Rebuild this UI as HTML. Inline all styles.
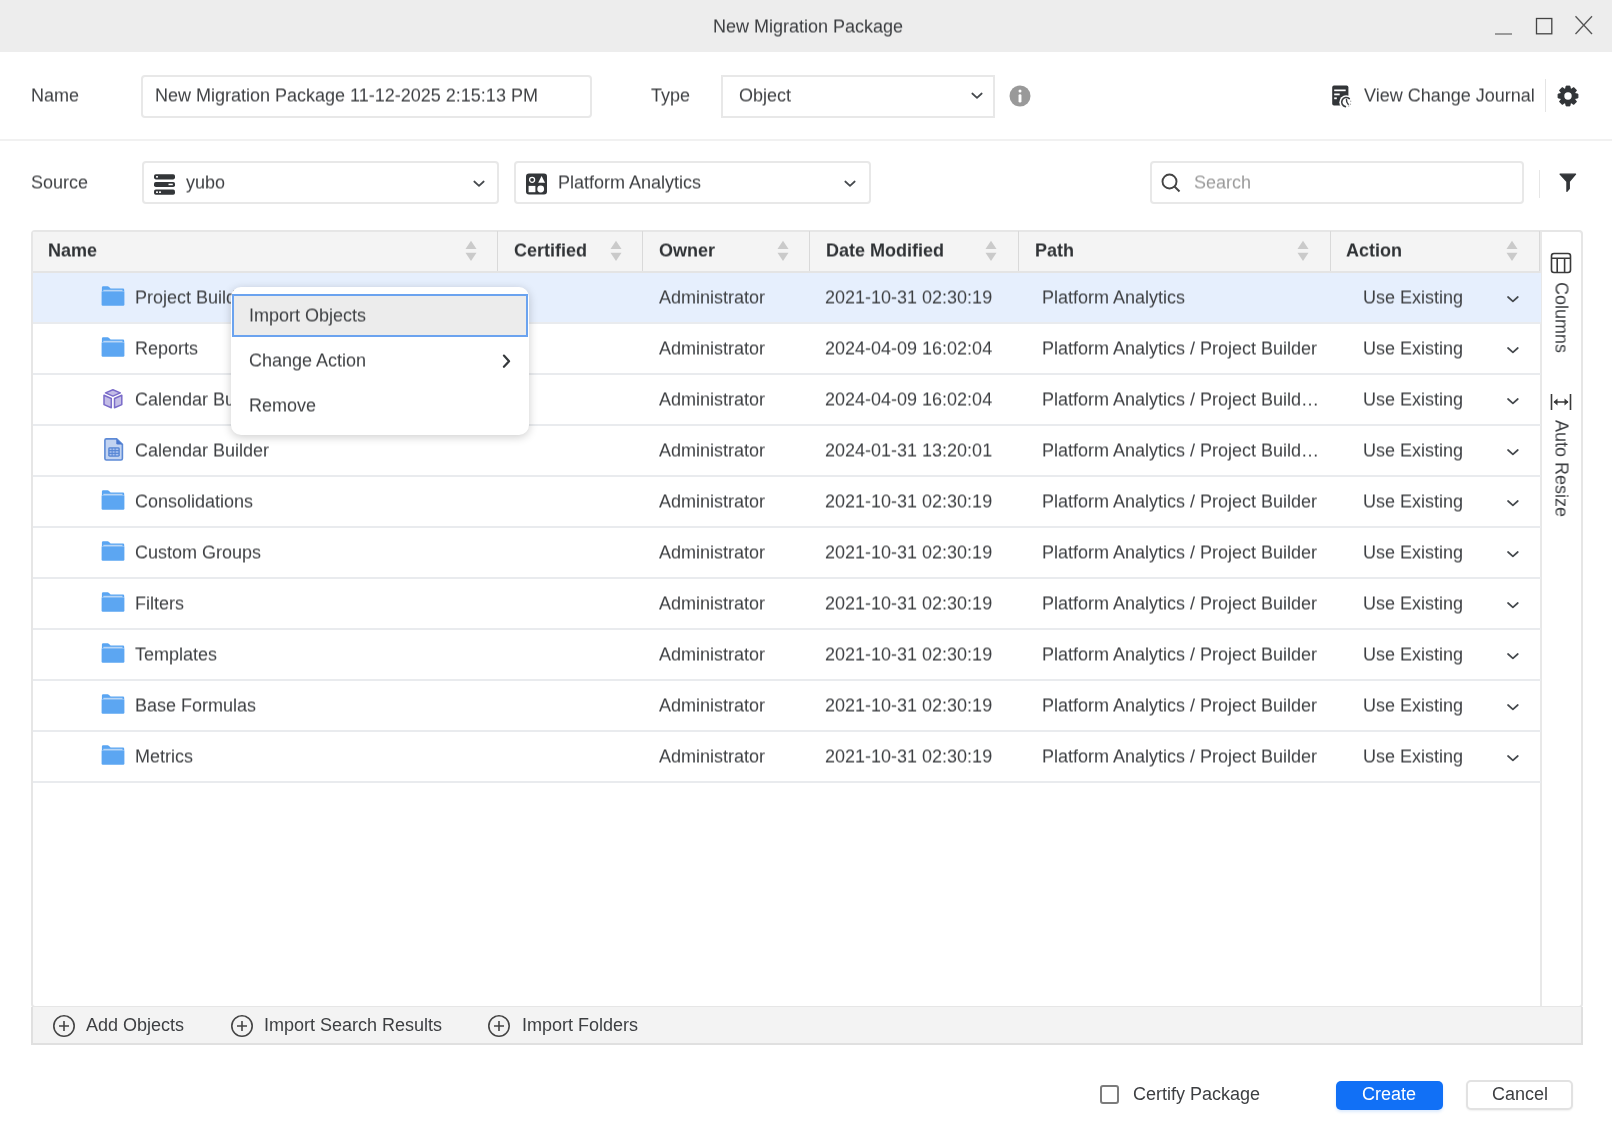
<!DOCTYPE html>
<html><head><meta charset="utf-8">
<style>
*{box-sizing:border-box;margin:0;padding:0}
html,body{width:1612px;height:1125px;overflow:hidden;background:#fff;font-family:"Liberation Sans",sans-serif;font-size:18px;color:#3d3f42}
.a{position:absolute}
.t{position:absolute;white-space:nowrap;line-height:20px;will-change:transform;transform:translateY(-0.5px) rotate(0.02deg)}
.nt{transform:none}
#title{left:0;top:0;width:1612px;height:52px;background:#ededed}
.box{position:absolute;border:2px solid #e8e8e8;border-radius:4px;background:#fff}
.hdr{position:absolute;top:231px;height:41px;background:#f4f4f4}
.hd{position:absolute;top:241px;font-weight:bold;color:#303336;line-height:20px;white-space:nowrap;will-change:transform;transform:translateY(-0.5px) rotate(0.02deg)}
.sort{position:absolute;top:240px;width:12px;height:22px}
.row{position:absolute;left:33px;width:1508px;height:51px;border-bottom:1.5px solid #e6e6e6}
.chev{position:absolute;width:12px;height:8px}
</style></head><body>
<!-- Title bar -->
<div id="title" class="a"></div>
<div class="t" style="left:713px;top:17px;color:#3a3c3f">New Migration Package</div>
<svg class="a" style="left:1490px;top:10px" width="110" height="30" viewBox="0 0 110 30">
  <line x1="5" y1="24" x2="22" y2="24" stroke="#777" stroke-width="1.4"/>
  <rect x="46.5" y="8.5" width="15.3" height="15.3" fill="none" stroke="#444" stroke-width="1.3"/>
  <line x1="85.5" y1="6.3" x2="102" y2="24" stroke="#555" stroke-width="1.3"/>
  <line x1="102" y1="6.3" x2="85.5" y2="24" stroke="#555" stroke-width="1.3"/>
</svg>

<!-- Name row -->
<div class="t" style="left:31px;top:86px">Name</div>
<div class="box" style="left:141px;top:75px;width:451px;height:43px"></div>
<div class="t" style="left:155.3px;top:86px">New Migration Package 11-12-2025 2:15:13 PM</div>
<div class="t" style="left:651px;top:86px">Type</div>
<div class="box" style="left:721px;top:75px;width:274px;height:43px;border-radius:0"></div>
<div class="t" style="left:739px;top:86px">Object</div>
<svg class="a" style="left:971px;top:92px" width="12" height="8" viewBox="0 0 12 8"><path d="M1.3 1.5L6 5.8L10.7 1.5" fill="none" stroke="#45494d" stroke-width="1.7" stroke-linecap="round" stroke-linejoin="round"/></svg>
<svg class="a" style="left:1009px;top:85px" width="22" height="22" viewBox="0 0 22 22"><circle cx="11" cy="11" r="10.5" fill="#999"/><rect x="9.55" y="9.2" width="2.9" height="8.4" rx="1.4" fill="#fff"/><circle cx="11" cy="6" r="1.5" fill="#fff"/></svg>

<!-- View change journal -->
<svg class="a" style="left:1326px;top:80px" width="32" height="32" viewBox="0 0 32 32">
  <rect x="6.2" y="5.6" width="16.2" height="20" rx="1.8" fill="#323538"/>
  <rect x="8.2" y="9.5" width="11.5" height="1.7" fill="#fff"/>
  <rect x="8.2" y="13.5" width="5.5" height="1.8" fill="#fff"/>
  <rect x="8.2" y="17.4" width="2.6" height="1.8" fill="#fff"/>
  <circle cx="20.2" cy="22.2" r="6.9" fill="#fff"/>
  <path d="M23.3 18.6A4.6 4.6 0 1 0 19.4 26.6" fill="none" stroke="#3a3d40" stroke-width="1.6" stroke-linecap="round"/>
  <path d="M20.5 19.6Q20.3 22.6 22.2 24.2" fill="none" stroke="#3a3d40" stroke-width="1.5" stroke-linecap="round"/>
  <circle cx="24.7" cy="21.2" r="0.7" fill="#aaa"/>
  <circle cx="24.4" cy="24.2" r="0.7" fill="#aaa"/>
  <circle cx="22.7" cy="26" r="0.7" fill="#aaa"/>
</svg>
<div class="t" style="left:1364px;top:86px">View Change Journal</div>
<div class="a" style="left:1545px;top:79px;width:1px;height:33px;background:#e4e4e4"></div>
<svg class="a" style="left:1556px;top:84px" width="24" height="24" viewBox="0 0 24 24"><g fill="#323538" stroke="#323538" stroke-width="1" stroke-linejoin="round"><path d="M9.4 6.5L10.1 2.1H13.9L14.6 6.5Z" transform="rotate(0 12 12)"/><path d="M9.4 6.5L10.1 2.1H13.9L14.6 6.5Z" transform="rotate(45 12 12)"/><path d="M9.4 6.5L10.1 2.1H13.9L14.6 6.5Z" transform="rotate(90 12 12)"/><path d="M9.4 6.5L10.1 2.1H13.9L14.6 6.5Z" transform="rotate(135 12 12)"/><path d="M9.4 6.5L10.1 2.1H13.9L14.6 6.5Z" transform="rotate(180 12 12)"/><path d="M9.4 6.5L10.1 2.1H13.9L14.6 6.5Z" transform="rotate(225 12 12)"/><path d="M9.4 6.5L10.1 2.1H13.9L14.6 6.5Z" transform="rotate(270 12 12)"/><path d="M9.4 6.5L10.1 2.1H13.9L14.6 6.5Z" transform="rotate(315 12 12)"/><circle cx="12" cy="12" r="7.3"/></g><circle cx="12" cy="12" r="3.7" fill="#fff"/></svg>

<div class="a" style="left:0;top:139px;width:1612px;height:2px;background:#f1f1f1"></div>

<!-- Source row -->
<div class="t" style="left:31px;top:173px">Source</div>
<div class="box" style="left:142px;top:161px;width:357px;height:43px"></div>
<svg class="a" style="left:154px;top:174px" width="21" height="21" viewBox="0 0 21 21">
  <rect x="0" y="0.2" width="21" height="5.2" rx="1.8" fill="#333639"/>
  <rect x="0" y="7.9" width="21" height="5.2" rx="1.8" fill="#333639"/>
  <rect x="0" y="15.6" width="21" height="5.2" rx="1.8" fill="#333639"/>
  <rect x="2" y="2.1" width="2" height="1.5" fill="#fff"/>
  <rect x="14.5" y="9.7" width="4.3" height="1.5" fill="#fff"/>
  <rect x="2" y="17.4" width="2" height="1.5" fill="#fff"/>
  <rect x="5" y="17.4" width="2" height="1.5" fill="#fff"/>
</svg>
<div class="t" style="left:186px;top:173px">yubo</div>
<svg class="a" style="left:473px;top:180px" width="12" height="8" viewBox="0 0 12 8"><path d="M1.3 1.5L6 5.8L10.7 1.5" fill="none" stroke="#45494d" stroke-width="1.7" stroke-linecap="round" stroke-linejoin="round"/></svg>

<div class="box" style="left:514px;top:161px;width:357px;height:43px"></div>
<svg class="a" style="left:526px;top:173px" width="22" height="22" viewBox="0 0 22 22">
  <rect x="0" y="0.5" width="21" height="21" rx="3" fill="#333639"/>
  <circle cx="6.1" cy="6.8" r="2.5" fill="none" stroke="#fff" stroke-width="1.3"/>
  <path d="M15.6 3L19 9.8H12.2Z" fill="#fff"/>
  <rect x="2.6" y="12.9" width="6.8" height="6.3" fill="#fff"/>
  <circle cx="14.7" cy="16" r="3.4" fill="#fff"/>
</svg>
<div class="t" style="left:558px;top:173px">Platform Analytics</div>
<svg class="a" style="left:844px;top:180px" width="12" height="8" viewBox="0 0 12 8"><path d="M1.3 1.5L6 5.8L10.7 1.5" fill="none" stroke="#45494d" stroke-width="1.7" stroke-linecap="round" stroke-linejoin="round"/></svg>

<div class="box" style="left:1150px;top:161px;width:374px;height:43px"></div>
<svg class="a" style="left:1159px;top:171px" width="24" height="24" viewBox="0 0 24 24"><circle cx="10.5" cy="10.5" r="7" fill="none" stroke="#444" stroke-width="1.9"/><path d="M15.5 15.5L20.5 20.5" stroke="#444" stroke-width="2"/></svg>
<div class="t" style="left:1194px;top:173px;color:#9a9a9a">Search</div>
<div class="a" style="left:1539px;top:170px;width:1px;height:28px;background:#e6e6e6"></div>
<svg class="a" style="left:1558px;top:172px" width="20" height="22" viewBox="0 0 20 22"><path d="M2 2.2H17.6L11.3 9.5V16.6L8.9 19.4V9.5Z" fill="#323538" stroke="#323538" stroke-width="1.2" stroke-linejoin="round"/></svg>


<div class="a" style="left:31px;top:230px;width:1552px;height:778px;border:2px solid #e6e6e6;border-radius:4px;background:#fff"></div>
<div class="a" style="left:33px;top:232px;width:1508px;height:39px;background:#f4f4f4"></div>
<div class="a" style="left:33px;top:271px;width:1508px;height:2px;background:#e4e4e4"></div>
<div class="a" style="left:496.5px;top:231px;width:1px;height:40px;background:#d9d9d9"></div>
<div class="a" style="left:642.0px;top:231px;width:1px;height:40px;background:#d9d9d9"></div>
<div class="a" style="left:808.5px;top:231px;width:1px;height:40px;background:#d9d9d9"></div>
<div class="a" style="left:1017.5px;top:231px;width:1px;height:40px;background:#d9d9d9"></div>
<div class="a" style="left:1329.5px;top:231px;width:1px;height:40px;background:#d9d9d9"></div>
<div class="a" style="left:1538.5px;top:231px;width:1px;height:40px;background:#d9d9d9"></div>
<div class="hd" style="left:48px">Name</div>
<div class="hd" style="left:514px">Certified</div>
<div class="hd" style="left:659px">Owner</div>
<div class="hd" style="left:826px">Date Modified</div>
<div class="hd" style="left:1035px">Path</div>
<div class="hd" style="left:1346px">Action</div>
<svg class="a" style="left:465px;top:240px" width="12" height="22" viewBox="0 0 12 22"><path d="M0.5 9L6 0.7L11.5 9Z" fill="#cacaca"/><path d="M0.5 12.7L6 21L11.5 12.7Z" fill="#cacaca"/></svg>
<svg class="a" style="left:610px;top:240px" width="12" height="22" viewBox="0 0 12 22"><path d="M0.5 9L6 0.7L11.5 9Z" fill="#cacaca"/><path d="M0.5 12.7L6 21L11.5 12.7Z" fill="#cacaca"/></svg>
<svg class="a" style="left:777px;top:240px" width="12" height="22" viewBox="0 0 12 22"><path d="M0.5 9L6 0.7L11.5 9Z" fill="#cacaca"/><path d="M0.5 12.7L6 21L11.5 12.7Z" fill="#cacaca"/></svg>
<svg class="a" style="left:985px;top:240px" width="12" height="22" viewBox="0 0 12 22"><path d="M0.5 9L6 0.7L11.5 9Z" fill="#cacaca"/><path d="M0.5 12.7L6 21L11.5 12.7Z" fill="#cacaca"/></svg>
<svg class="a" style="left:1297px;top:240px" width="12" height="22" viewBox="0 0 12 22"><path d="M0.5 9L6 0.7L11.5 9Z" fill="#cacaca"/><path d="M0.5 12.7L6 21L11.5 12.7Z" fill="#cacaca"/></svg>
<svg class="a" style="left:1506px;top:240px" width="12" height="22" viewBox="0 0 12 22"><path d="M0.5 9L6 0.7L11.5 9Z" fill="#cacaca"/><path d="M0.5 12.7L6 21L11.5 12.7Z" fill="#cacaca"/></svg>
<div class="a" style="left:1540px;top:232px;width:2px;height:774px;background:#e8e8e8"></div>
<svg class="a" style="left:1550px;top:252px" width="22" height="22" viewBox="0 0 22 22"><rect x="1.5" y="1.5" width="19" height="19" rx="2.5" fill="none" stroke="#3a3a3a" stroke-width="1.6"/><path d="M1.5 6.3H20.5M7.2 6.3V20.5M14.6 6.3V20.5" stroke="#3a3a3a" stroke-width="1.6"/></svg>
<div class="t" style="left:1552px;top:282px;writing-mode:vertical-rl;transform:translate(-0.5px,0) rotate(0.02deg)">Columns</div>
<svg class="a" style="left:1550px;top:392px" width="22" height="20" viewBox="0 0 22 20"><path d="M1.5 2V18M20.5 2V18M4 10H18" stroke="#3a3a3a" stroke-width="1.6"/><path d="M3.5 10L7.5 6.5V13.5Z M18.5 10L14.5 6.5V13.5Z" fill="#3a3a3a"/></svg>
<div class="t" style="left:1552px;top:420px;writing-mode:vertical-rl;transform:translate(-0.5px,0) rotate(0.02deg)">Auto Resize</div>
<div class="a" style="left:33px;top:273px;width:1508px;height:49px;background:#e6effd"></div>
<div class="a" style="left:33px;top:322px;width:1508px;height:2px;background:#e9ebee"></div>
<svg class="a" style="left:101px;top:286px" width="24" height="21" viewBox="0 0 24 21">
<path d="M0.9 1.5Q0.9 0.3 2.1 0.3H6.6Q7.3 0.3 7.8 0.8L9.6 2.6H22Q23.2 2.6 23.2 3.8V5.6H0.9Z" fill="#5aa5f2"/>
<rect x="2.3" y="3.8" width="19.2" height="1.8" fill="#b9d6f6"/>
<path d="M0.6 5.6H23.4V18.6Q23.4 19.8 22.2 19.8H1.8Q0.6 19.8 0.6 18.6Z" fill="#5ca6f2"/>
</svg>
<div class="t" style="left:135px;top:287.5px">Project Builder</div>
<div class="t" style="left:659px;top:287.5px">Administrator</div>
<div class="t" style="left:825px;top:287.5px">2021-10-31 02:30:19</div>
<div class="t" style="left:1042px;top:287.5px">Platform Analytics</div>
<div class="t" style="left:1363px;top:287.5px">Use Existing</div>
<svg class="a" style="left:1506px;top:295px" width="13" height="8" viewBox="0 0 13 8"><path d="M2 2L6.9 6.3L11.8 2" fill="none" stroke="#45494d" stroke-width="1.7" stroke-linecap="round" stroke-linejoin="round"/></svg>
<div class="a" style="left:33px;top:373px;width:1508px;height:2px;background:#e9ebee"></div>
<svg class="a" style="left:101px;top:337px" width="24" height="21" viewBox="0 0 24 21">
<path d="M0.9 1.5Q0.9 0.3 2.1 0.3H6.6Q7.3 0.3 7.8 0.8L9.6 2.6H22Q23.2 2.6 23.2 3.8V5.6H0.9Z" fill="#5aa5f2"/>
<rect x="2.3" y="3.8" width="19.2" height="1.8" fill="#b9d6f6"/>
<path d="M0.6 5.6H23.4V18.6Q23.4 19.8 22.2 19.8H1.8Q0.6 19.8 0.6 18.6Z" fill="#5ca6f2"/>
</svg>
<div class="t" style="left:135px;top:338.5px">Reports</div>
<div class="t" style="left:659px;top:338.5px">Administrator</div>
<div class="t" style="left:825px;top:338.5px">2024-04-09 16:02:04</div>
<div class="t" style="left:1042px;top:338.5px">Platform Analytics / Project Builder</div>
<div class="t" style="left:1363px;top:338.5px">Use Existing</div>
<svg class="a" style="left:1506px;top:346px" width="13" height="8" viewBox="0 0 13 8"><path d="M2 2L6.9 6.3L11.8 2" fill="none" stroke="#45494d" stroke-width="1.7" stroke-linecap="round" stroke-linejoin="round"/></svg>
<div class="a" style="left:33px;top:424px;width:1508px;height:2px;background:#e9ebee"></div>
<svg class="a" style="left:103px;top:389px" width="20" height="20" viewBox="0 0 20 20">
<path d="M9.9 0.8L17.3 3.9L9.9 7.1L2.5 3.9Z" fill="#c3bce6" stroke="#7a6bc9" stroke-width="1.5" stroke-linejoin="round"/>
<path d="M1 6.2L8.3 9.5V18.8L1 15.6Z" fill="#c3bce6" stroke="#7a6bc9" stroke-width="1.5" stroke-linejoin="round"/>
<path d="M18.8 6.2L11.5 9.5V18.8L18.8 15.6Z" fill="#c3bce6" stroke="#7a6bc9" stroke-width="1.5" stroke-linejoin="round"/>
</svg>
<div class="t" style="left:135px;top:389.5px">Calendar Builder</div>
<div class="t" style="left:659px;top:389.5px">Administrator</div>
<div class="t" style="left:825px;top:389.5px">2024-04-09 16:02:04</div>
<div class="t" style="left:1042px;top:389.5px">Platform Analytics / Project Build…</div>
<div class="t" style="left:1363px;top:389.5px">Use Existing</div>
<svg class="a" style="left:1506px;top:397px" width="13" height="8" viewBox="0 0 13 8"><path d="M2 2L6.9 6.3L11.8 2" fill="none" stroke="#45494d" stroke-width="1.7" stroke-linecap="round" stroke-linejoin="round"/></svg>
<div class="a" style="left:33px;top:475px;width:1508px;height:2px;background:#e9ebee"></div>
<svg class="a" style="left:103.5px;top:438px" width="20" height="23" viewBox="0 0 20 24" preserveAspectRatio="none">
<path d="M2.4 0.9H12.6L18.4 6.7V21.4Q18.4 22.9 16.9 22.9H2.4Q0.9 22.9 0.9 21.4V2.4Q0.9 0.9 2.4 0.9Z" fill="#c2d3f1" stroke="#5d8ad6" stroke-width="1.6"/>
<path d="M12.3 1V5.4Q12.3 6.9 13.8 6.9H18.3Z" fill="#4a78d0"/>
<rect x="4.2" y="9.6" width="11.6" height="10" rx="1.5" fill="#5685d4"/>
<g fill="#a9c1ee"><rect x="5.6" y="11" width="2" height="1.6"/><rect x="8.6" y="11" width="2" height="1.6"/><rect x="11.6" y="11" width="2.8" height="1.6"/>
<rect x="5.6" y="13.8" width="2" height="1.6"/><rect x="8.6" y="13.8" width="2" height="1.6"/><rect x="11.6" y="13.8" width="2.8" height="1.6"/>
<rect x="5.6" y="16.6" width="2" height="1.6"/><rect x="8.6" y="16.6" width="2" height="1.6"/><rect x="11.6" y="16.6" width="2.8" height="1.6"/></g>
</svg>
<div class="t" style="left:135px;top:440.5px">Calendar Builder</div>
<div class="t" style="left:659px;top:440.5px">Administrator</div>
<div class="t" style="left:825px;top:440.5px">2024-01-31 13:20:01</div>
<div class="t" style="left:1042px;top:440.5px">Platform Analytics / Project Build…</div>
<div class="t" style="left:1363px;top:440.5px">Use Existing</div>
<svg class="a" style="left:1506px;top:448px" width="13" height="8" viewBox="0 0 13 8"><path d="M2 2L6.9 6.3L11.8 2" fill="none" stroke="#45494d" stroke-width="1.7" stroke-linecap="round" stroke-linejoin="round"/></svg>
<div class="a" style="left:33px;top:526px;width:1508px;height:2px;background:#e9ebee"></div>
<svg class="a" style="left:101px;top:490px" width="24" height="21" viewBox="0 0 24 21">
<path d="M0.9 1.5Q0.9 0.3 2.1 0.3H6.6Q7.3 0.3 7.8 0.8L9.6 2.6H22Q23.2 2.6 23.2 3.8V5.6H0.9Z" fill="#5aa5f2"/>
<rect x="2.3" y="3.8" width="19.2" height="1.8" fill="#b9d6f6"/>
<path d="M0.6 5.6H23.4V18.6Q23.4 19.8 22.2 19.8H1.8Q0.6 19.8 0.6 18.6Z" fill="#5ca6f2"/>
</svg>
<div class="t" style="left:135px;top:491.5px">Consolidations</div>
<div class="t" style="left:659px;top:491.5px">Administrator</div>
<div class="t" style="left:825px;top:491.5px">2021-10-31 02:30:19</div>
<div class="t" style="left:1042px;top:491.5px">Platform Analytics / Project Builder</div>
<div class="t" style="left:1363px;top:491.5px">Use Existing</div>
<svg class="a" style="left:1506px;top:499px" width="13" height="8" viewBox="0 0 13 8"><path d="M2 2L6.9 6.3L11.8 2" fill="none" stroke="#45494d" stroke-width="1.7" stroke-linecap="round" stroke-linejoin="round"/></svg>
<div class="a" style="left:33px;top:577px;width:1508px;height:2px;background:#e9ebee"></div>
<svg class="a" style="left:101px;top:541px" width="24" height="21" viewBox="0 0 24 21">
<path d="M0.9 1.5Q0.9 0.3 2.1 0.3H6.6Q7.3 0.3 7.8 0.8L9.6 2.6H22Q23.2 2.6 23.2 3.8V5.6H0.9Z" fill="#5aa5f2"/>
<rect x="2.3" y="3.8" width="19.2" height="1.8" fill="#b9d6f6"/>
<path d="M0.6 5.6H23.4V18.6Q23.4 19.8 22.2 19.8H1.8Q0.6 19.8 0.6 18.6Z" fill="#5ca6f2"/>
</svg>
<div class="t" style="left:135px;top:542.5px">Custom Groups</div>
<div class="t" style="left:659px;top:542.5px">Administrator</div>
<div class="t" style="left:825px;top:542.5px">2021-10-31 02:30:19</div>
<div class="t" style="left:1042px;top:542.5px">Platform Analytics / Project Builder</div>
<div class="t" style="left:1363px;top:542.5px">Use Existing</div>
<svg class="a" style="left:1506px;top:550px" width="13" height="8" viewBox="0 0 13 8"><path d="M2 2L6.9 6.3L11.8 2" fill="none" stroke="#45494d" stroke-width="1.7" stroke-linecap="round" stroke-linejoin="round"/></svg>
<div class="a" style="left:33px;top:628px;width:1508px;height:2px;background:#e9ebee"></div>
<svg class="a" style="left:101px;top:592px" width="24" height="21" viewBox="0 0 24 21">
<path d="M0.9 1.5Q0.9 0.3 2.1 0.3H6.6Q7.3 0.3 7.8 0.8L9.6 2.6H22Q23.2 2.6 23.2 3.8V5.6H0.9Z" fill="#5aa5f2"/>
<rect x="2.3" y="3.8" width="19.2" height="1.8" fill="#b9d6f6"/>
<path d="M0.6 5.6H23.4V18.6Q23.4 19.8 22.2 19.8H1.8Q0.6 19.8 0.6 18.6Z" fill="#5ca6f2"/>
</svg>
<div class="t" style="left:135px;top:593.5px">Filters</div>
<div class="t" style="left:659px;top:593.5px">Administrator</div>
<div class="t" style="left:825px;top:593.5px">2021-10-31 02:30:19</div>
<div class="t" style="left:1042px;top:593.5px">Platform Analytics / Project Builder</div>
<div class="t" style="left:1363px;top:593.5px">Use Existing</div>
<svg class="a" style="left:1506px;top:601px" width="13" height="8" viewBox="0 0 13 8"><path d="M2 2L6.9 6.3L11.8 2" fill="none" stroke="#45494d" stroke-width="1.7" stroke-linecap="round" stroke-linejoin="round"/></svg>
<div class="a" style="left:33px;top:679px;width:1508px;height:2px;background:#e9ebee"></div>
<svg class="a" style="left:101px;top:643px" width="24" height="21" viewBox="0 0 24 21">
<path d="M0.9 1.5Q0.9 0.3 2.1 0.3H6.6Q7.3 0.3 7.8 0.8L9.6 2.6H22Q23.2 2.6 23.2 3.8V5.6H0.9Z" fill="#5aa5f2"/>
<rect x="2.3" y="3.8" width="19.2" height="1.8" fill="#b9d6f6"/>
<path d="M0.6 5.6H23.4V18.6Q23.4 19.8 22.2 19.8H1.8Q0.6 19.8 0.6 18.6Z" fill="#5ca6f2"/>
</svg>
<div class="t" style="left:135px;top:644.5px">Templates</div>
<div class="t" style="left:659px;top:644.5px">Administrator</div>
<div class="t" style="left:825px;top:644.5px">2021-10-31 02:30:19</div>
<div class="t" style="left:1042px;top:644.5px">Platform Analytics / Project Builder</div>
<div class="t" style="left:1363px;top:644.5px">Use Existing</div>
<svg class="a" style="left:1506px;top:652px" width="13" height="8" viewBox="0 0 13 8"><path d="M2 2L6.9 6.3L11.8 2" fill="none" stroke="#45494d" stroke-width="1.7" stroke-linecap="round" stroke-linejoin="round"/></svg>
<div class="a" style="left:33px;top:730px;width:1508px;height:2px;background:#e9ebee"></div>
<svg class="a" style="left:101px;top:694px" width="24" height="21" viewBox="0 0 24 21">
<path d="M0.9 1.5Q0.9 0.3 2.1 0.3H6.6Q7.3 0.3 7.8 0.8L9.6 2.6H22Q23.2 2.6 23.2 3.8V5.6H0.9Z" fill="#5aa5f2"/>
<rect x="2.3" y="3.8" width="19.2" height="1.8" fill="#b9d6f6"/>
<path d="M0.6 5.6H23.4V18.6Q23.4 19.8 22.2 19.8H1.8Q0.6 19.8 0.6 18.6Z" fill="#5ca6f2"/>
</svg>
<div class="t" style="left:135px;top:695.5px">Base Formulas</div>
<div class="t" style="left:659px;top:695.5px">Administrator</div>
<div class="t" style="left:825px;top:695.5px">2021-10-31 02:30:19</div>
<div class="t" style="left:1042px;top:695.5px">Platform Analytics / Project Builder</div>
<div class="t" style="left:1363px;top:695.5px">Use Existing</div>
<svg class="a" style="left:1506px;top:703px" width="13" height="8" viewBox="0 0 13 8"><path d="M2 2L6.9 6.3L11.8 2" fill="none" stroke="#45494d" stroke-width="1.7" stroke-linecap="round" stroke-linejoin="round"/></svg>
<div class="a" style="left:33px;top:781px;width:1508px;height:2px;background:#e9ebee"></div>
<svg class="a" style="left:101px;top:745px" width="24" height="21" viewBox="0 0 24 21">
<path d="M0.9 1.5Q0.9 0.3 2.1 0.3H6.6Q7.3 0.3 7.8 0.8L9.6 2.6H22Q23.2 2.6 23.2 3.8V5.6H0.9Z" fill="#5aa5f2"/>
<rect x="2.3" y="3.8" width="19.2" height="1.8" fill="#b9d6f6"/>
<path d="M0.6 5.6H23.4V18.6Q23.4 19.8 22.2 19.8H1.8Q0.6 19.8 0.6 18.6Z" fill="#5ca6f2"/>
</svg>
<div class="t" style="left:135px;top:746.5px">Metrics</div>
<div class="t" style="left:659px;top:746.5px">Administrator</div>
<div class="t" style="left:825px;top:746.5px">2021-10-31 02:30:19</div>
<div class="t" style="left:1042px;top:746.5px">Platform Analytics / Project Builder</div>
<div class="t" style="left:1363px;top:746.5px">Use Existing</div>
<svg class="a" style="left:1506px;top:754px" width="13" height="8" viewBox="0 0 13 8"><path d="M2 2L6.9 6.3L11.8 2" fill="none" stroke="#45494d" stroke-width="1.7" stroke-linecap="round" stroke-linejoin="round"/></svg>
<div class="a" style="left:31px;top:1007px;width:1552px;height:38px;background:#f3f3f3;border:2px solid #e0e0e0;border-top:none"></div>
<svg class="a" style="left:52px;top:1014px" width="24" height="24" viewBox="0 0 24 24"><circle cx="12" cy="12" r="10.2" fill="none" stroke="#444" stroke-width="1.6"/><path d="M7 12H17M12 7V17" stroke="#444" stroke-width="1.6"/></svg>
<div class="t nt" style="left:86px;top:1015px">Add Objects</div>
<svg class="a" style="left:230px;top:1014px" width="24" height="24" viewBox="0 0 24 24"><circle cx="12" cy="12" r="10.2" fill="none" stroke="#444" stroke-width="1.6"/><path d="M7 12H17M12 7V17" stroke="#444" stroke-width="1.6"/></svg>
<div class="t nt" style="left:264px;top:1015px">Import Search Results</div>
<svg class="a" style="left:487px;top:1014px" width="24" height="24" viewBox="0 0 24 24"><circle cx="12" cy="12" r="10.2" fill="none" stroke="#444" stroke-width="1.6"/><path d="M7 12H17M12 7V17" stroke="#444" stroke-width="1.6"/></svg>
<div class="t nt" style="left:522px;top:1015px">Import Folders</div>
<div class="a" style="left:231px;top:287px;width:297.5px;height:147.5px;background:#fff;border-radius:10px;box-shadow:0 2px 10px rgba(0,0,0,0.2)"></div>
<div class="a" style="left:232px;top:294px;width:296px;height:43px;background:#ececec;border:2px solid #6ba3ef"></div>
<div class="t" style="left:249px;top:306px">Import Objects</div>
<div class="t" style="left:249px;top:351px">Change Action</div>
<div class="t" style="left:249px;top:396px">Remove</div>
<svg class="a" style="left:500px;top:353px" width="12" height="16" viewBox="0 0 12 16"><path d="M3.9 2.6L9.1 8.2L3.9 13.8" fill="none" stroke="#35393c" stroke-width="2.2" stroke-linecap="round" stroke-linejoin="round"/></svg>
<div class="a" style="left:1100px;top:1085px;width:19px;height:19px;border:2px solid #7c7c7c;border-radius:3px"></div>
<div class="t nt" style="left:1133px;top:1084px">Certify Package</div>
<div class="a" style="left:1336px;top:1081px;width:107px;height:29px;background:#1170f6;border-radius:5px;box-shadow:0 2px 3px rgba(17,112,244,0.15)"></div>
<div class="t nt" style="left:1362px;top:1084px;color:#fff">Create</div>
<div class="a" style="left:1466px;top:1080px;width:107px;height:30px;background:#fff;border:2px solid #e2e2e2;border-radius:5px;box-shadow:0 1px 2px rgba(0,0,0,0.06)"></div>
<div class="t nt" style="left:1492px;top:1084px">Cancel</div>
</body></html>
